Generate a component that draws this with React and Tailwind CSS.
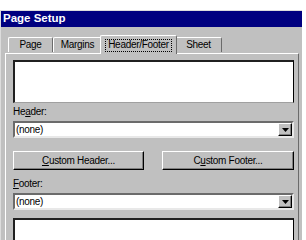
export default function App() {
  const tab = "h-[15px] mt-[2px] flex items-center justify-center border-t border-l border-white border-r border-r-[#6b6b6b] rounded-t-[2px]";
  const sunken = "border-2 border-t-[#6b6b6b] border-l-[#6b6b6b] border-b-[#e8e8e8] border-r-[#e8e8e8]";
  const raised = "border border-t-white border-l-white border-r-black border-b-black shadow-[inset_-1px_-1px_0_#808080]";

  return (
    <div className="w-[306px] h-[240px] bg-white overflow-hidden pt-[10px] font-['Liberation_Sans',Arial,sans-serif] text-[10px] tracking-[-0.3px] text-black leading-none">
      <div className="w-[302px] bg-[#c0c0c0] border-l border-t border-[#dcdcdc]">
        <div className="h-[16px] bg-[#000080] text-white font-bold text-[11.5px] tracking-[0px] flex items-center pl-[2px]">
          Page Setup
        </div>

        <div className="pl-[4px] pr-[3px] pt-[8px]">
          <div className="flex h-[18px] pl-[3px]">
            <div className={`${tab} w-[45px]`}>Page</div>
            <div className={`${tab} w-[49px]`}>Margins</div>
            <div className="relative z-10 -mx-[2px] w-[77px] h-[19px] bg-[#c0c0c0] flex items-center justify-center border-t border-l border-white border-r border-r-[#6b6b6b] rounded-t-[2px]">
              <span className="border border-dotted border-black px-[2px] h-[13px] flex items-center">Header/Footer</span>
            </div>
            <div className={`${tab} w-[47px]`}>Sheet</div>
          </div>

          <div className="border-t border-l border-white border-r border-r-[#6b6b6b] pl-[7px] pr-[4px] pt-[6px] pb-[10px]">
            <div className="h-[43px] bg-white border-t-2 border-l-2 border-r border-b border-t-[#202020] border-l-[#202020] border-r-black border-b-[#a0a0a0]" />

            <div className="mt-[3px] h-[12px] flex items-center">
              He<span className="underline">a</span>der:
            </div>

            <div className={`mt-[3px] h-[17px] bg-white flex items-center ${sunken}`}>
              <span className="flex-1 pl-[1px]">(none)</span>
              <div className={`w-[14px] h-[13px] bg-[#c0c0c0] flex items-center justify-center ${raised}`}>
                <svg width="7" height="4" viewBox="0 0 7 4"><path d="M0 0h7L3.5 4z" fill="#000" /></svg>
              </div>
            </div>

            <div className="mt-[13px] flex justify-between">
              <div className={`w-[131px] h-[19px] flex items-center justify-center ${raised}`}>
                <span><span className="underline">C</span>ustom Header...</span>
              </div>
              <div className={`w-[132px] h-[19px] flex items-center justify-center ${raised}`}>
                <span>C<span className="underline">u</span>stom Footer...</span>
              </div>
            </div>

            <div className="mt-[8px] h-[12px] flex items-center">
              <span className="underline">F</span>ooter:
            </div>

            <div className={`mt-[3px] h-[17px] bg-white flex items-center ${sunken}`}>
              <span className="flex-1 pl-[1px]">(none)</span>
              <div className={`w-[14px] h-[13px] bg-[#c0c0c0] flex items-center justify-center ${raised}`}>
                <svg width="7" height="4" viewBox="0 0 7 4"><path d="M0 0h7L3.5 4z" fill="#000" /></svg>
              </div>
            </div>

            <div className="mt-[8px] h-[40px] bg-white border-t-2 border-l-2 border-r border-t-[#202020] border-l-[#202020] border-r-black" />
          </div>
        </div>
      </div>
    </div>
  );
}
